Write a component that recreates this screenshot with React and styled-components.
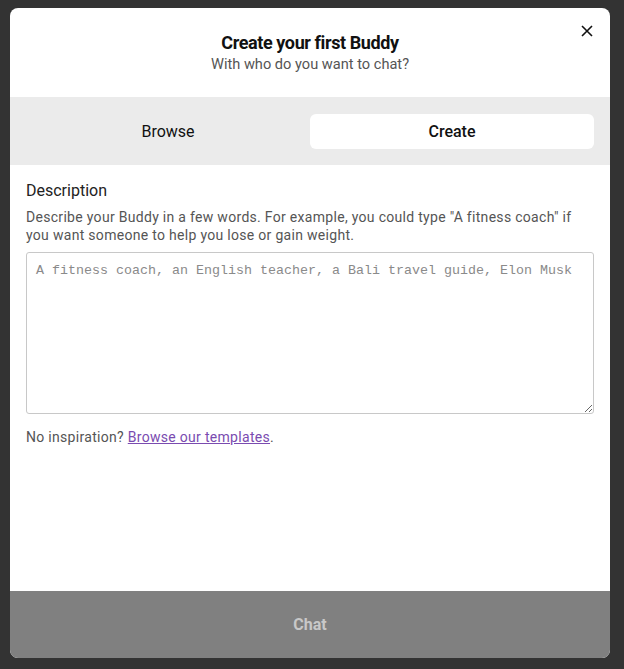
import styled, { createGlobalStyle } from 'styled-components';

const Global = createGlobalStyle`
  html, body {
    margin: 0;
    padding: 0;
    background: #333333;
  }
  body {
    font-family: Roboto, "Noto Sans", sans-serif;
  }
`;

// Фон страницы
const Page = styled.div`
  width: 624px;
  height: 669px;
  padding: 8px 14px 11px 10px;
  box-sizing: border-box;
  display: flex;
`;

// Окно модалки
const Modal = styled.div`
  flex: 1;
  background: #fff;
  border-radius: 8px;
  overflow: hidden;
  display: flex;
  flex-direction: column;
`;

const Header = styled.div`
  position: relative;
  height: 89px;
  display: flex;
  flex-direction: column;
  align-items: center;
  padding-top: 24px;
  box-sizing: border-box;
`;

const Title = styled.h2`
  margin: 0;
  font-size: 18px;
  font-weight: 700;
  color: #111;
  letter-spacing: -0.4px;
  line-height: 22px;
`;

const Subtitle = styled.p`
  margin: 0;
  font-size: 14.6px;
  color: #555;
  line-height: 21px;
`;

const CloseButton = styled.button`
  position: absolute;
  top: 11px;
  right: 11px;
  width: 24px;
  height: 24px;
  padding: 0;
  border: none;
  background: none;
  display: flex;
  align-items: center;
  justify-content: center;
  cursor: pointer;
`;

const Tabs = styled.div`
  background: #ebebeb;
  padding: 17px 16px 16px;
  display: grid;
  grid-template-columns: 1fr 1fr;
`;

const Tab = styled.button`
  height: 35px;
  border: none;
  border-radius: 6px;
  background: ${(p) => (p.$active ? '#fff' : 'transparent')};
  color: #111;
  font-family: inherit;
  font-size: 16px;
  font-weight: ${(p) => (p.$active ? 500 : 400)};
  cursor: pointer;
`;

const Body = styled.div`
  flex: 1;
  padding: 16px 16px 0;
  display: flex;
  flex-direction: column;
`;

const Label = styled.label`
  font-size: 16px;
  color: #222;
  line-height: 20px;
`;

const Hint = styled.p`
  margin: 7px 0 8px;
  font-size: 14px;
  letter-spacing: 0.3px;
  color: #555;
  line-height: 18px;
`;

const Area = styled.textarea`
  height: 162px;
  box-sizing: border-box;
  border: 1px solid #c8c8c8;
  border-radius: 3px;
  padding: 10px 9px;
  font-family: "Liberation Mono", monospace;
  font-size: 13.33px;
  &::placeholder {
    color: #8a8a8a;
  }
`;

const Footnote = styled.p`
  margin: 15px 0 0;
  font-size: 14px;
  letter-spacing: 0.3px;
  color: #555;
`;

const Link = styled.a`
  color: #7a4bb0;
  text-decoration: underline;
`;

const ChatButton = styled.button`
  height: 67px;
  border: none;
  background: #808080;
  color: #c8c8c8;
  font-family: inherit;
  font-size: 16px;
  font-weight: 700;
`;

export default function App() {
  return (
    <Page>
      <Global />
      <Modal>
        <Header>
          <Title>Create your first Buddy</Title>
          <Subtitle>With who do you want to chat?</Subtitle>
          <CloseButton aria-label="Close">
            <svg width="12" height="12" viewBox="0 0 12 12">
              <path d="M1 1L11 11M11 1L1 11" stroke="#111" strokeWidth="1.6" />
            </svg>
          </CloseButton>
        </Header>
        <Tabs>
          <Tab>Browse</Tab>
          <Tab $active>Create</Tab>
        </Tabs>
        <Body>
          <Label>Description</Label>
          <Hint>
            Describe your Buddy in a few words. For example, you could type "A fitness coach" if you want
            someone to help you lose or gain weight.
          </Hint>
          <Area placeholder="A fitness coach, an English teacher, a Bali travel guide, Elon Musk" />
          <Footnote>
            No inspiration? <Link href="#">Browse our templates</Link>.
          </Footnote>
        </Body>
        <ChatButton>Chat</ChatButton>
      </Modal>
    </Page>
  );
}
